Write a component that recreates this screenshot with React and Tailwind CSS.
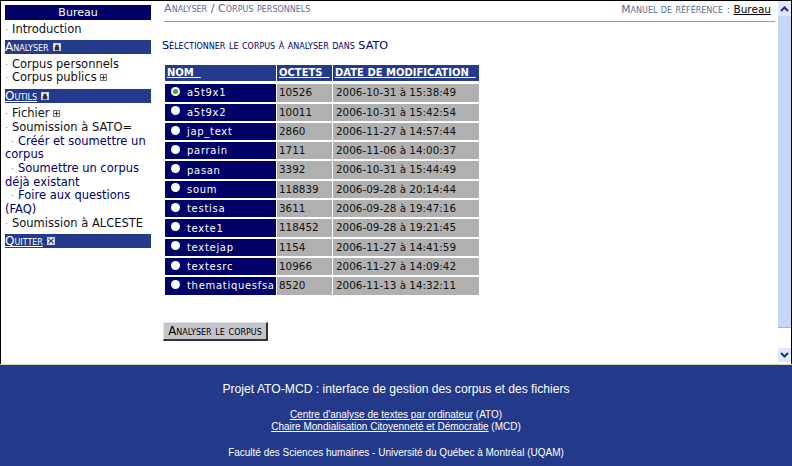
const rows = [
  ["a5t9x1", "10526", "2006-10-31 à 15:38:49"],
  ["a5t9x2", "10011", "2006-10-31 à 15:42:54"],
  ["jap_text", "2860", "2006-11-27 à 14:57:44"],
  ["parrain", "1711", "2006-11-06 à 14:00:37"],
  ["pasan", "3392", "2006-10-31 à 15:44:49"],
  ["soum", "118839", "2006-09-28 à 20:14:44"],
  ["testisa", "3611", "2006-09-28 à 19:47:16"],
  ["texte1", "118452", "2006-09-28 à 19:21:45"],
  ["textejap", "1154", "2006-11-27 à 14:41:59"],
  ["textesrc", "10966", "2006-11-27 à 14:09:42"],
  ["thematiquesfsa", "8520", "2006-11-13 à 14:32:11"],
];

function Dot() {
  return <span className="inline-block w-[7px] text-[#777] text-[9px] leading-none">·</span>;
}

function MiniIcon({ kind }) {
  return (
    <svg width="8" height="8" viewBox="0 0 8 8" className="inline-block ml-[4px] align-[0px]">
      <rect x="0.5" y="0.5" width="7" height="7" fill="#fff" stroke="#cfd3e6" strokeWidth="1" />
      {kind === "x" && <path d="M1.5 1.5l5 5M6.5 1.5l-5 5" stroke="#1f2f80" strokeWidth="1.1" />}
      {kind === "lock" && <path d="M2 4h4v3H2zM2.8 4V2h2.4v2" fill="#333" stroke="#333" strokeWidth="0.7" />}
    </svg>
  );
}

function Plus() {
  return (
    <svg width="7" height="7" viewBox="0 0 7 7" className="inline-block ml-[3px] align-[0px]">
      <rect x="0.5" y="0.5" width="6" height="6" fill="#eee" stroke="#777" />
      <path d="M3.5 1.5v4M1.5 3.5h4" stroke="#333" />
    </svg>
  );
}

function SideHead({ label, kind, link, className }) {
  return (
    <div className={`h-[14px] bg-[#243a8c] text-white text-[12px] leading-[14px] [font-variant-caps:small-caps] ${className}`}>
      <span className={link ? "underline" : ""}>{label}</span>
      <MiniIcon kind={kind} />
    </div>
  );
}

const subItem = "before:content-['·'] before:inline-block before:w-[13px] before:pl-[6px] before:text-[#777] before:text-[9px] before:leading-none";

export default function App() {
  return (
    <div className="w-[792px] h-[466px] flex flex-col overflow-hidden bg-white font-['DejaVu_Sans',sans-serif]">
      <div className="h-[364px] flex border-t border-l border-r border-black border-b-0 relative shrink-0">
        <aside className="w-[151px] shrink-0 pl-[4px] pt-[4px] text-[11.5px] leading-[13.7px] text-[#111]">
          <div className="w-[146px] h-[15px] bg-[#000066] text-white text-[11px] leading-[15px] text-center font-medium">Bureau</div>
          <div className="mt-[3px]"><Dot />Introduction</div>
          <SideHead label="Analyser" kind="lock" className="w-[146px] mt-[3px]" />
          <div className="mt-[4px]"><Dot />Corpus personnels</div>
          <div><Dot />Corpus publics<Plus /></div>
          <SideHead label="Outils" kind="lock" link className="w-[146px] mt-[4px]" />
          <div className="mt-[4px]"><Dot />Fichier<Plus /></div>
          <div><Dot />Soumission à SATO=</div>
          <div className="text-[#000066]">
            <div className={subItem}>Créér et soumettre un corpus</div>
            <div className={subItem}>Soumettre un corpus déjà existant</div>
            <div className={subItem}>Foire aux questions (FAQ)</div>
          </div>
          <div><Dot />Soumission à ALCESTE</div>
          <SideHead label="Quitter" kind="x" link className="w-[146px] mt-[4px]" />
        </aside>

        <main className="w-[623px] shrink-0 pl-[12px]">
          <div className="h-[21px] border-b border-[#999] flex justify-between items-start pt-[2px] text-[11.2px] leading-[12px] [font-variant-caps:small-caps] text-[#5c6a94]">
            <span>Analyser / Corpus personnels</span>
            <span className="pr-[4px] text-[10.8px]">
              Manuel de référence : <span className="text-[10.5px] text-black underline [font-variant-caps:normal]">Bureau</span>
            </span>
          </div>
          <h1 className="mt-[18px] -ml-[2px] text-[11.2px] leading-[12px] font-normal [font-variant-caps:small-caps] text-[#000066]">
            Sélectionner le corpus à analyser dans SATO
          </h1>
          <div className="mt-[13px] ml-[1px] w-[315px] grid grid-cols-[111px_55px_146px] gap-x-[1px] gap-y-[2px] auto-rows-[17.3px] text-[10.4px]">
            {["Nom", "Octets", "Date de modification"].map((h) => (
              <div key={h} className="bg-[#243a8c] text-white font-bold pl-[2px] h-[16px] leading-[16px] uppercase text-[10px]">
                <span className="underline">{h}{"\u00a0\u00a0"}</span>
              </div>
            ))}
            {rows.map((r, i) => (
              <div key={r[0]} className="contents">
                <div className="bg-[#000066] text-white flex items-center pl-[6px] tracking-[0.7px] whitespace-nowrap">
                  <span className="w-[9px] h-[9px] rounded-full bg-white mr-[6px] mb-[3px] shrink-0 flex items-center justify-center">
                    {i === 0 && <span className="w-[5px] h-[5px] rounded-full bg-[#3aa53a]" />}
                  </span>
                  <span className="text-[10px] ml-[1px]">{r[0]}</span>
                </div>
                <div className="bg-[#b0b0b0] text-[#111] pl-[2px] leading-[16px]">{r[1]}</div>
                <div className="bg-[#b0b0b0] text-[#111] pl-[3px] leading-[16px]">{r[2]}</div>
              </div>
            ))}
          </div>
          <button className="block mt-[27px] -ml-[1px] w-[105px] h-[19px] bg-[#c4c4cc] border border-t-[#e4e4ea] border-l-[#e4e4ea] border-r-[#333] border-b-[#333] border-r-2 border-b-2 text-[11.7px] leading-[14px] [font-variant-caps:small-caps] text-black">
            Analyser le corpus
          </button>
        </main>

        <div className="w-[13px] shrink-0 flex flex-col ml-[3px]">
          <div className="h-[15px] bg-[#dfe9fb] flex items-center justify-center">
            <svg width="9" height="6" viewBox="0 0 9 6"><path d="M1 5l3.5-3.5L8 5" fill="none" stroke="#1a2f80" strokeWidth="2" /></svg>
          </div>
          <div className="h-[312px] bg-[#c5d8f8] border-b border-[#a9b4d8]" />
          <div className="flex-1 bg-white" />
          <div className="h-[14px] mb-[2px] bg-[#dfe9fb] flex items-center justify-center">
            <svg width="9" height="6" viewBox="0 0 9 6"><path d="M1 1l3.5 3.5L8 1" fill="none" stroke="#1a2f80" strokeWidth="2" /></svg>
          </div>
        </div>
      </div>

      <footer className="flex-1 bg-[#233a8a] border-t border-[#d8d4b8] text-white text-center font-['Liberation_Sans',sans-serif]">
        <div className="mt-[16px] text-[12.15px] leading-[16px]">Projet ATO-MCD : interface de gestion des corpus et des fichiers</div>
        <div className="mt-[12px] text-[10px] leading-[12px]">
          <span className="underline">Centre d'analyse de textes par ordinateur</span> (ATO)
        </div>
        <div className="text-[10px] leading-[12px]">
          <span className="underline">Chaire Mondialisation Citoyenneté et Démocratie</span> (MCD)
        </div>
        <div className="mt-[14px] text-[10px] leading-[12px]">Faculté des Sciences humaines - Université du Québec à Montréal (UQAM)</div>
      </footer>
    </div>
  );
}
